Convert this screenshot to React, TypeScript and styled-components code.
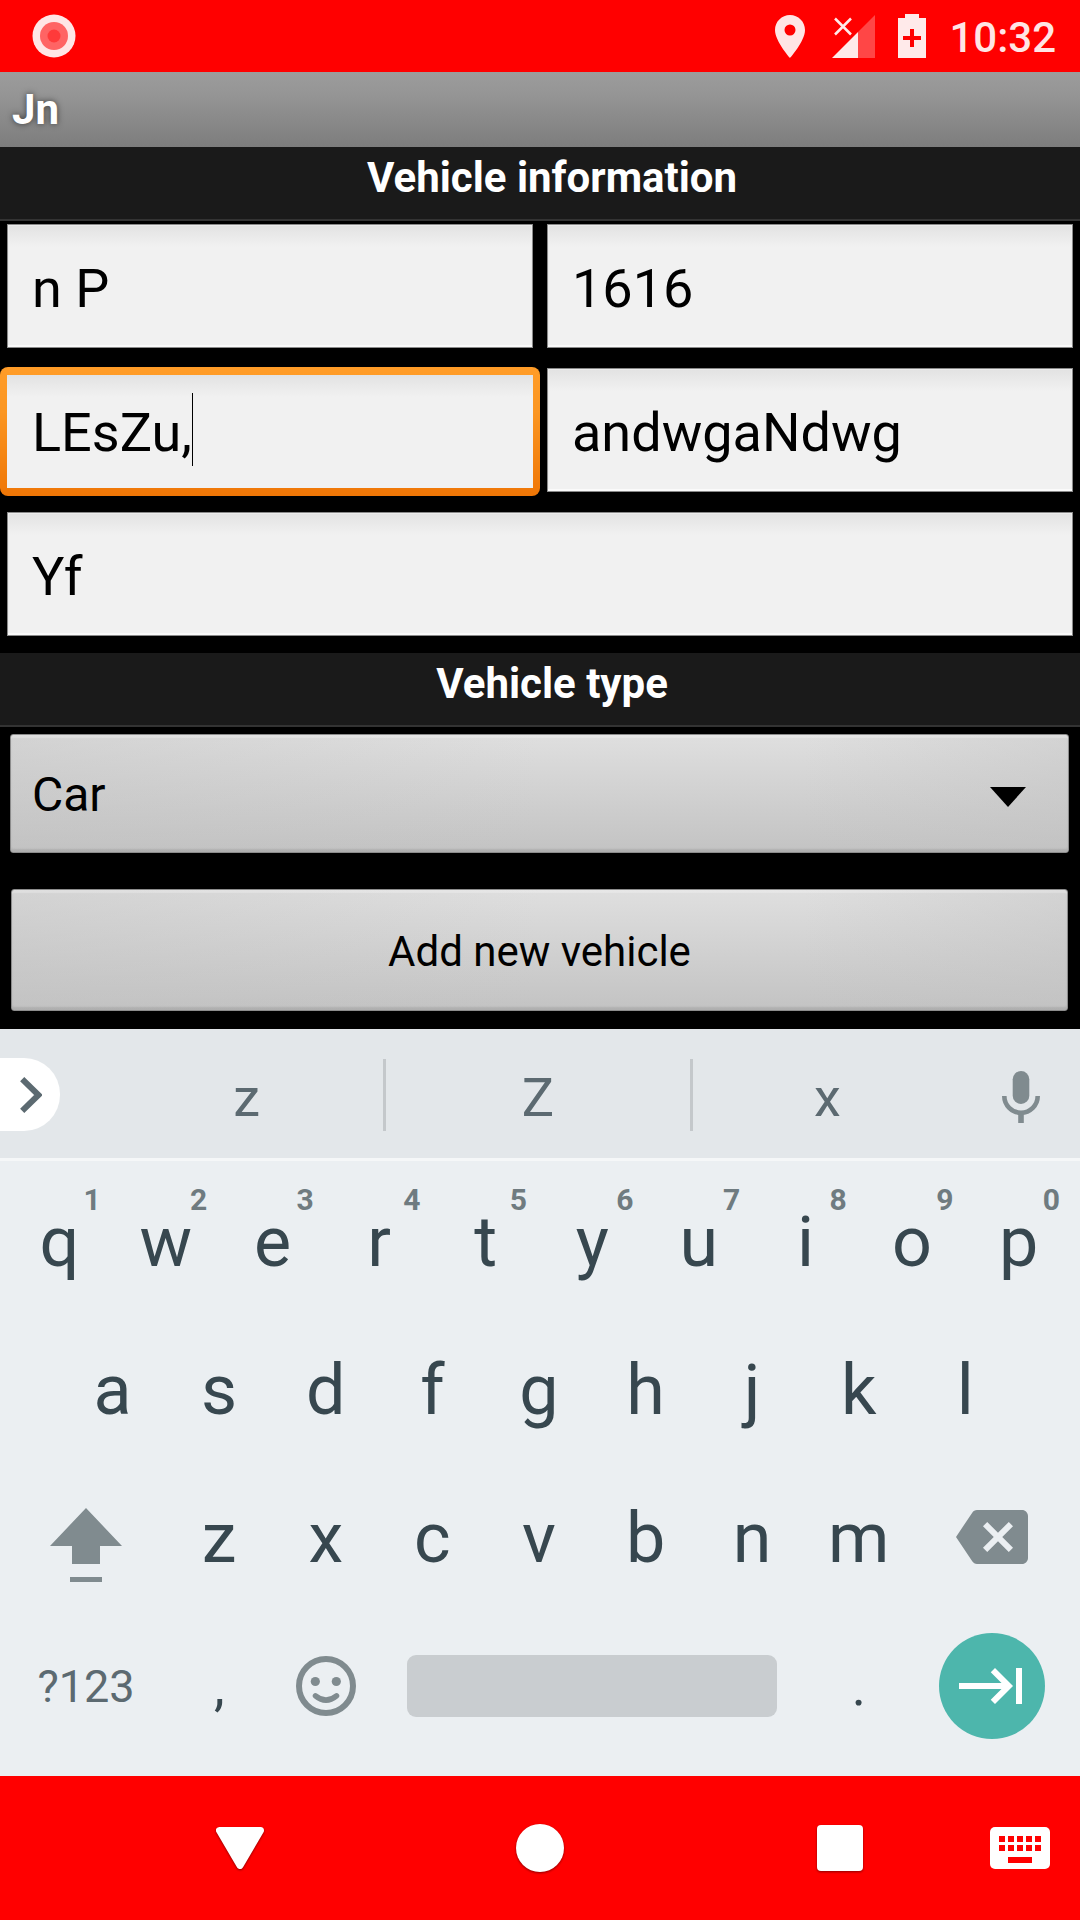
import React, { useState } from "react";
import styled, { createGlobalStyle, css } from "styled-components";

const GlobalStyle = createGlobalStyle`
  *, *::before, *::after { box-sizing: border-box; }
  html, body { margin: 0; background: #000; }
  body, button, input, select { font-family: Roboto, "Liberation Sans", sans-serif; }
  button { margin: 0; padding: 0; border: 0; background: none; cursor: pointer; }
  svg { display: block; flex: none; }
`;

const Screen = styled.div`
  display: flex;
  flex-direction: column;
  min-height: 100vh;
  background: #000;
`;

/* Status bar */

const StatusBar = styled.header`
  display: flex;
  align-items: center;
  justify-content: space-between;
  height: 72px;
  padding: 0 24px 0 32px;
  background: #f00;
`;

const StatusIcons = styled.div`
  display: flex;
  align-items: center;
  gap: 23px;
`;

const Clock = styled.time`
  padding-top: 3px;
  color: #ffe5e5;
  font-size: 42px;
  font-weight: 500;
  line-height: 69px;
`;

/* Form */

const TitleBar = styled.h1`
  margin: 0;
  padding: 0 12px;
  background: linear-gradient(#9c9c9c, #959595 30%, #7d7d7d);
  color: #fff;
  font-size: 42px;
  font-weight: 700;
  line-height: 75px;
  text-shadow: 0 0 6px rgba(0, 0, 0, 0.6);
`;

const Form = styled.form`
  display: flex;
  flex: 1;
  flex-direction: column;
`;

const SectionTitle = styled.h2`
  height: 74px;
  margin: 0;
  padding-left: 24px;
  border-bottom: 2px solid #333;
  background: #1a1a1a;
  color: #fff;
  font-size: 42px;
  font-weight: 700;
  line-height: 61px;
  text-align: center;
`;

const FieldGrid = styled.div`
  display: grid;
  grid-template-columns: repeat(2, minmax(0, 1fr));
`;

const FieldCell = styled.div<{ $wide?: boolean }>`
  position: relative;
  display: flex;
  height: 144px;
  ${(p) => p.$wide && css`grid-column: 1 / -1;`}
`;

const innerShade = "linear-gradient(#e2e2e2, #e9e9e9 10px, #f1f1f1 22px)";

const TextField = styled.input<{ $active?: boolean }>`
  flex: 1;
  min-width: 0;
  outline: 0;
  color: #000;
  font-size: 54px;
  caret-color: transparent;
  ${(p) =>
    p.$active
      ? css`
          margin: 2px 0 13px;
          padding: 2px 25px 0;
          border: solid transparent;
          border-width: 8px 7px;
          border-radius: 8px;
          background:
            ${innerShade} padding-box,
            linear-gradient(#ff9c28, #fb9622 35%, #ef7606) border-box;
        `
      : css`
          margin: 3px 7px 17px;
          padding: 5px 24px 0;
          border: 1px solid #8a8a8a;
          background: ${innerShade};
          box-shadow: inset 0 -2px 0 #fafafa, inset 0 0 0 1px #ececec;
        `}
`;

const Caret = styled.span`
  position: absolute;
  top: 28px;
  left: 192px;
  width: 1px;
  height: 73px;
  background: #000;
`;

const raised = css`
  border: 1px solid #8c8c8c;
  border-radius: 3px;
  background:
    linear-gradient(90deg, rgba(194, 194, 194, 0.4), rgba(194, 194, 194, 0) 50%, rgba(194, 194, 194, 0) 75%, rgba(194, 194, 194, 0.4)),
    linear-gradient(#dfdfdf, #c3c3c3);
  box-shadow: inset 0 3px 1px rgba(255, 255, 255, 0.25), inset 0 -3px 2px rgba(0, 0, 0, 0.1);
  color: #000;
`;

const SelectWrap = styled.div`
  position: relative;
  display: flex;
  margin: 7px 11px 36px 10px;
`;

const TypeSelect = styled.select`
  flex: 1;
  height: 119px;
  padding: 2px 80px 0 21px;
  outline: 0;
  appearance: none;
  font-size: 48px;
  ${raised}
`;

const SelectArrow = styled.svg`
  position: absolute;
  top: 53px;
  right: 43px;
  pointer-events: none;
`;

const SubmitButton = styled.button`
  && {
    height: 122px;
    margin: 0 12px 18px 11px;
    padding-top: 3px;
    font-size: 42px;
    ${raised}
  }
`;

/* Keyboard */

const Keyboard = styled.section`
  background: #ebeff2;
`;

const SuggestionStrip = styled.div`
  display: flex;
  align-items: center;
  height: 132px;
  padding-top: 2px;
  border-bottom: 3px solid #f5f7f8;
  background: #e3e7ea;
`;

const ExpandButton = styled.button`
  && {
    display: flex;
    align-items: center;
    width: 60px;
    height: 73px;
    margin-right: 50px;
    padding-left: 20px;
    border-radius: 0 36px 36px 0;
    background: #fff;
  }
`;

const Suggestion = styled.button<{ $grow: number }>`
  && {
    flex: ${(p) => p.$grow} 1 0;
    height: 72px;
    padding-top: 6px;
    color: #5c6a71;
    font-size: 54px;
    line-height: 66px;
  }
  && + & {
    border-left: 3px solid #c4c8cb;
  }
`;

const MicButton = styled.button`
  && {
    display: flex;
    align-items: center;
    justify-content: center;
    width: 118px;
    height: 72px;
    padding-top: 4px;
  }
`;

const KeyRows = styled.div`
  padding: 7px 8px 16px 6px;
`;

const KeyRow = styled.div<{ $inset?: boolean }>`
  display: flex;
  height: 148px;
  padding: 0 ${(p) => (p.$inset ? "5%" : "0")};
`;

const Key = styled.button<{ $span?: number; $size?: number; $muted?: boolean }>`
  position: relative;
  display: flex;
  flex: ${(p) => p.$span ?? 1} 1 0;
  align-items: center;
  justify-content: center;
  min-width: 0;
  color: ${(p) => (p.$muted ? "#5c6a71" : "#37474f")};
  font-size: ${(p) => p.$size ?? 70}px;
`;

const KeyHint = styled.span`
  position: absolute;
  top: 12px;
  right: 12px;
  color: #6f7b80;
  font-size: 30px;
  font-weight: 700;
  line-height: 40px;
`;

const SpaceBar = styled.span`
  width: 370px;
  max-width: 90%;
  height: 62px;
  border-radius: 9px;
  background: #c9cdd0;
`;

const EnterDisc = styled.span`
  display: flex;
  flex: none;
  align-items: center;
  justify-content: center;
  width: 106px;
  height: 106px;
  border-radius: 50%;
  background: #4db6ac;
`;

/* Navigation bar */

const NavBar = styled.nav`
  display: flex;
  height: 144px;
  padding: 0 30px 0 90px;
  background: #f00;
`;

const NavButton = styled.button<{ $fixed?: boolean }>`
  display: flex;
  flex: ${(p) => (p.$fixed ? "0 0 60px" : "1 1 0")};
  align-items: center;
  justify-content: center;
  svg {
    overflow: visible;
    filter: ${(p) => (p.$fixed ? "none" : "drop-shadow(0 1px 1px rgba(0, 0, 0, 0.45))")};
  }
`;

const TOP_KEYS = "qwertyuiop".split("");
const MIDDLE_KEYS = "asdfghjkl".split("");
const BOTTOM_KEYS = "zxcvbnm".split("");
const ICON = "#808b8f";

function StatusArea() {
  return (
    <StatusBar>
      <svg width="44" height="44" viewBox="0 0 44 44" aria-hidden="true">
        <circle cx="22" cy="22" r="21.5" fill="#ffe5e5" />
        <circle cx="22" cy="22" r="14" fill="#ff6464" />
        <circle cx="22" cy="22" r="6.5" fill="#ff3a3a" />
      </svg>
      <StatusIcons>
        <svg width="34" height="43" viewBox="0 0 34 43" fill="#ffe5e5" aria-hidden="true">
          <path
            fillRule="evenodd"
            d="M15 0C6.7 0 0 6.7 0 15c0 11.200 15 28 15 28s15-16.800 15-28C30 6.700 23.300 0 15 0zm0 20.500a5.500 5.500 0 1 1 0-11 5.500 5.500 0 0 1 0 11z"
          />
        </svg>
        <svg width="43" height="43" viewBox="0 0 43 43" aria-hidden="true">
          <path d="M26 17L43 0v43H26z" fill="#ff4646" />
          <path d="M0 43L26 17v26z" fill="#ffeaea" />
          <path d="M3 3.500l16 16M19 3.500l-16 16" stroke="#ffeaea" strokeWidth="2.500" fill="none" />
        </svg>
        <svg width="28" height="44" viewBox="0 0 28 44" aria-hidden="true">
          <path d="M7 0h14v4h7v40H0V4h7z" fill="#ffeaea" />
          <path d="M12 15h4v7h7v4h-7v7h-4v-7H5v-4h7z" fill="#f00" />
        </svg>
        <Clock>10:32</Clock>
      </StatusIcons>
    </StatusBar>
  );
}

function VehicleForm() {
  const [values, setValues] = useState(["n P", "1616", "LEsZu,", "andwgaNdwg", "Yf"]);
  const names = ["Name", "Year", "Model", "Make", "Plate"];
  const activeIndex = 2;
  return (
    <Form onSubmit={(e) => e.preventDefault()}>
      <SectionTitle>Vehicle information</SectionTitle>
      <FieldGrid>
        {values.map((value, i) => (
          <FieldCell key={names[i]} $wide={i === 4}>
            <TextField
              type="text"
              aria-label={names[i]}
              value={value}
              $active={i === activeIndex}
              onChange={(e) => setValues(values.map((v, j) => (j === i ? e.target.value : v)))}
            />
            {i === activeIndex && <Caret />}
          </FieldCell>
        ))}
      </FieldGrid>
      <SectionTitle>Vehicle type</SectionTitle>
      <SelectWrap>
        <TypeSelect aria-label="Vehicle type" defaultValue="Car">
          <option>Car</option>
        </TypeSelect>
        <SelectArrow width="36" height="20" viewBox="0 0 36 20" aria-hidden="true">
          <path d="M0 0h36L18 20z" />
        </SelectArrow>
      </SelectWrap>
      <SubmitButton type="submit">Add new vehicle</SubmitButton>
    </Form>
  );
}

function SoftKeyboard() {
  return (
    <Keyboard aria-label="Keyboard">
      <SuggestionStrip>
        <ExpandButton aria-label="More">
          <svg width="22" height="36" viewBox="0 0 22 36" aria-hidden="true">
            <path d="M2.200 2.200L18.500 18 2.200 33.800" fill="none" stroke="#5c6a71" strokeWidth="6" />
          </svg>
        </ExpandButton>
        <Suggestion $grow={275}>z</Suggestion>
        <Suggestion $grow={306}>Z</Suggestion>
        <Suggestion $grow={271}>x</Suggestion>
        <MicButton aria-label="Voice input">
          <svg width="38" height="52" viewBox="0 0 38 52" aria-hidden="true">
            <rect x="10.700" width="16.600" height="33" rx="8.300" fill={ICON} />
            <path d="M2.300 25a16.700 16.700 0 0 0 33.400 0" fill="none" stroke={ICON} strokeWidth="4.600" />
            <path d="M16.200 42h5.600v10h-5.600z" fill={ICON} />
          </svg>
        </MicButton>
      </SuggestionStrip>
      <KeyRows>
        <KeyRow>
          {TOP_KEYS.map((letter, i) => (
            <Key key={letter}>
              {letter}
              <KeyHint>{(i + 1) % 10}</KeyHint>
            </Key>
          ))}
        </KeyRow>
        <KeyRow $inset>
          {MIDDLE_KEYS.map((letter) => (
            <Key key={letter}>{letter}</Key>
          ))}
        </KeyRow>
        <KeyRow>
          <Key $span={1.5} aria-label="Shift">
            <svg width="72" height="88" viewBox="0 -14 72 88" fill={ICON} aria-hidden="true">
              <path d="M36 0l36 38H50v18H22V38H0zM20 69h32v5H20z" />
            </svg>
          </Key>
          {BOTTOM_KEYS.map((letter) => (
            <Key key={letter}>{letter}</Key>
          ))}
          <Key $span={1.5} aria-label="Backspace">
            <svg width="72" height="75" viewBox="0 0 24 25" fill={ICON} aria-hidden="true">
              <path d="M22 3H7c-.69 0-1.230.35-1.590.88L0 12l5.410 8.110c.36.53.9.89 1.590.89h15c1.100 0 2-.9 2-2V5c0-1.100-.9-2-2-2zm-3 12.590L17.590 17 14 13.410 10.410 17 9 15.590 12.590 12 9 8.410 10.410 7 14 10.590 17.590 7 19 8.410 15.410 12 19 15.590z" />
            </svg>
          </Key>
        </KeyRow>
        <KeyRow>
          <Key $span={1.5} $size={45} $muted>
            ?123
          </Key>
          <Key $size={54}>,</Key>
          <Key aria-label="Emoji">
            <svg width="60" height="60" viewBox="0 0 60 60" fill={ICON} aria-hidden="true">
              <circle cx="30" cy="30" r="27" fill="none" stroke={ICON} strokeWidth="6" />
              <circle cx="19.300" cy="25.500" r="4.600" />
              <circle cx="40.300" cy="25.500" r="4.600" />
              <path d="M19.500 39.800Q30 48.500 40.500 39.800" fill="none" stroke={ICON} strokeWidth="5.500" strokeLinecap="round" />
            </svg>
          </Key>
          <Key $span={4} aria-label="Space">
            <SpaceBar />
          </Key>
          <Key $size={54}>.</Key>
          <Key $span={1.5} aria-label="Next">
            <EnterDisc>
              <svg width="72" height="72" viewBox="0 0 24 24" fill="#fff" aria-hidden="true">
                <path d="M11.590 7.410L15.170 11H1v2h14.170l-3.590 3.590L13 18l6-6-6-6zM20 6v12h2V6z" />
              </svg>
            </EnterDisc>
          </Key>
        </KeyRow>
      </KeyRows>
    </Keyboard>
  );
}

function SystemNav() {
  const columns = [9, 18, 27, 36, 45];
  return (
    <NavBar>
      <NavButton aria-label="Back">
        <svg width="48" height="42" viewBox="0 0 48 42" aria-hidden="true">
          <path d="M3.500 3.500h41L24 38.500z" fill="#fff" stroke="#fff" strokeWidth="7" strokeLinejoin="round" />
        </svg>
      </NavButton>
      <NavButton aria-label="Home">
        <svg width="48" height="48" viewBox="0 0 48 48" aria-hidden="true">
          <circle cx="24" cy="24" r="24" fill="#fff" />
        </svg>
      </NavButton>
      <NavButton aria-label="Recent apps">
        <svg width="46" height="46" viewBox="0 0 46 46" aria-hidden="true">
          <rect width="46" height="46" rx="4" fill="#fff" />
        </svg>
      </NavButton>
      <NavButton $fixed aria-label="Switch keyboard">
        <svg width="60" height="42" viewBox="0 0 60 42" aria-hidden="true">
          <rect width="60" height="42" rx="5" fill="#fff" />
          {columns.map((x) => (
            <path key={x} d={`M${x} 9h6v6h-6zM${x} 18h6v6h-6z`} fill="#f00" />
          ))}
          <path d="M18 30h24v6H18z" fill="#f00" />
        </svg>
      </NavButton>
    </NavBar>
  );
}

export default function App() {
  return (
    <Screen>
      <GlobalStyle />
      <StatusArea />
      <TitleBar>Jn</TitleBar>
      <VehicleForm />
      <SoftKeyboard />
      <SystemNav />
    </Screen>
  );
}
